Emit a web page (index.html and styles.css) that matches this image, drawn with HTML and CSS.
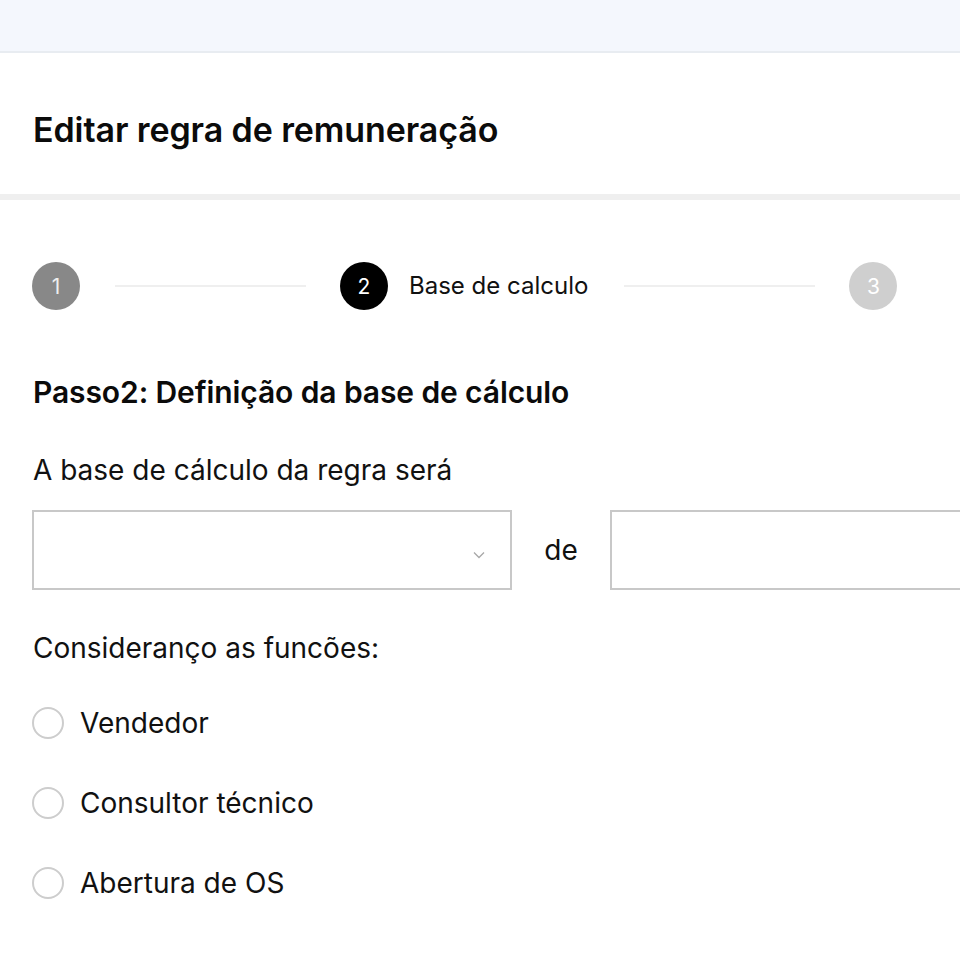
FILE: index.html
```html
<!DOCTYPE html>
<html lang="pt">
<head>
<meta charset="utf-8">
<title>Editar regra de remuneração</title>
<link rel="stylesheet" href="styles.css">
</head>
<body>
<div class="topbar"></div>
<header class="header">
  <h1 class="title">Editar regra de remuneração</h1>
</header>
<main class="content">
  <div class="stepper">
    <div class="step-circle step-done">1</div>
    <div class="step-line"></div>
    <div class="step-circle step-active">2</div>
    <div class="step-label">Base de calculo</div>
    <div class="step-line"></div>
    <div class="step-circle step-next">3</div>
  </div>

  <h2 class="section-title">Passo2: Definição da base de cálculo</h2>

  <p class="field-label">A base de cálculo da regra será</p>
  <div class="field-row">
    <div class="select">
      <svg class="chevron" width="12" height="8" viewBox="0 0 12 8"><path d="M1 1.5 L6 6.5 L11 1.5" fill="none" stroke="#a8a8a8" stroke-width="1.3"/></svg>
    </div>
    <span class="de">de</span>
    <div class="input"></div>
  </div>

  <p class="field-label functions-label">Consideranço as funcões:</p>
  <ul class="radios">
    <li class="radio-item"><span class="radio"></span><span class="radio-text">Vendedor</span></li>
    <li class="radio-item"><span class="radio"></span><span class="radio-text">Consultor técnico</span></li>
    <li class="radio-item"><span class="radio"></span><span class="radio-text">Abertura de OS</span></li>
  </ul>
</main>
</body>
</html>
```

FILE: styles.css
```css
* { box-sizing: border-box; }
html, body { margin: 0; padding: 0; background: #fff; overflow: hidden; }
body {
  font-family: "Inter", "Noto Sans", sans-serif;
  color: #111;
  width: 960px;
}
.topbar {
  height: 53px;
  background: #f4f7fd;
  border-bottom: 2px solid #e8ecf1;
}
.header {
  height: 147px;
  border-bottom: 6px solid #efefef;
  display: flex;
  align-items: center;
  padding: 12px 0 0 33px;
}
.title {
  margin: 0;
  font-size: 34px;
  line-height: 40px;
  font-weight: 600;
  letter-spacing: -0.1px;
  color: #0b0b0b;
}
.content {
  padding: 62px 0 0 32px;
}
.stepper {
  display: flex;
  align-items: center;
  height: 48px;
}
.step-circle {
  width: 48px;
  height: 48px;
  border-radius: 50%;
  display: flex;
  align-items: center;
  justify-content: center;
  font-size: 21px;
  color: #fff;
  flex: none;
}
.step-done { background: #888; color: #eee; }
.step-active { background: #000; }
.step-next { background: #cfcfcf; }
.step-line {
  width: 191px;
  height: 2px;
  background: #efefef;
  margin: 0 34px 0 35px;
  flex: none;
}
.step-label {
  margin-left: 21px;
  margin-right: 1px;
  font-size: 24px;
  line-height: 30px;
  color: #111;
}
.section-title {
  margin: 64px 0 0 1px;
  font-size: 30px;
  line-height: 36px;
  font-weight: 600;
  letter-spacing: -0.1px;
  color: #0b0b0b;
}
.field-label {
  margin: 43px 0 0 1px;
  font-size: 28px;
  line-height: 34px;
  color: #111;
}
.field-row {
  display: flex;
  align-items: center;
  margin-top: 23px;
}
.select {
  width: 480px;
  height: 80px;
  border: 2px solid #c8c8c8;
  position: relative;
  flex: none;
}
.chevron {
  position: absolute;
  right: 25px;
  top: 39px;
}
.de {
  font-size: 28px;
  width: 98px;
  text-align: center;
  flex: none;
}
.input {
  width: 400px;
  height: 80px;
  border: 2px solid #c8c8c8;
  flex: none;
}
.functions-label { margin-top: 41px; }
.radios {
  list-style: none;
  margin: 18px 0 0 0;
  padding: 0;
}
.radio-item {
  display: flex;
  align-items: center;
  height: 80px;
}
.radio {
  width: 32px;
  height: 32px;
  border-radius: 50%;
  border: 2px solid #cdcdcd;
  flex: none;
}
.radio-text {
  margin-left: 16px;
  font-size: 28px;
  line-height: 34px;
  color: #111;
}
```
